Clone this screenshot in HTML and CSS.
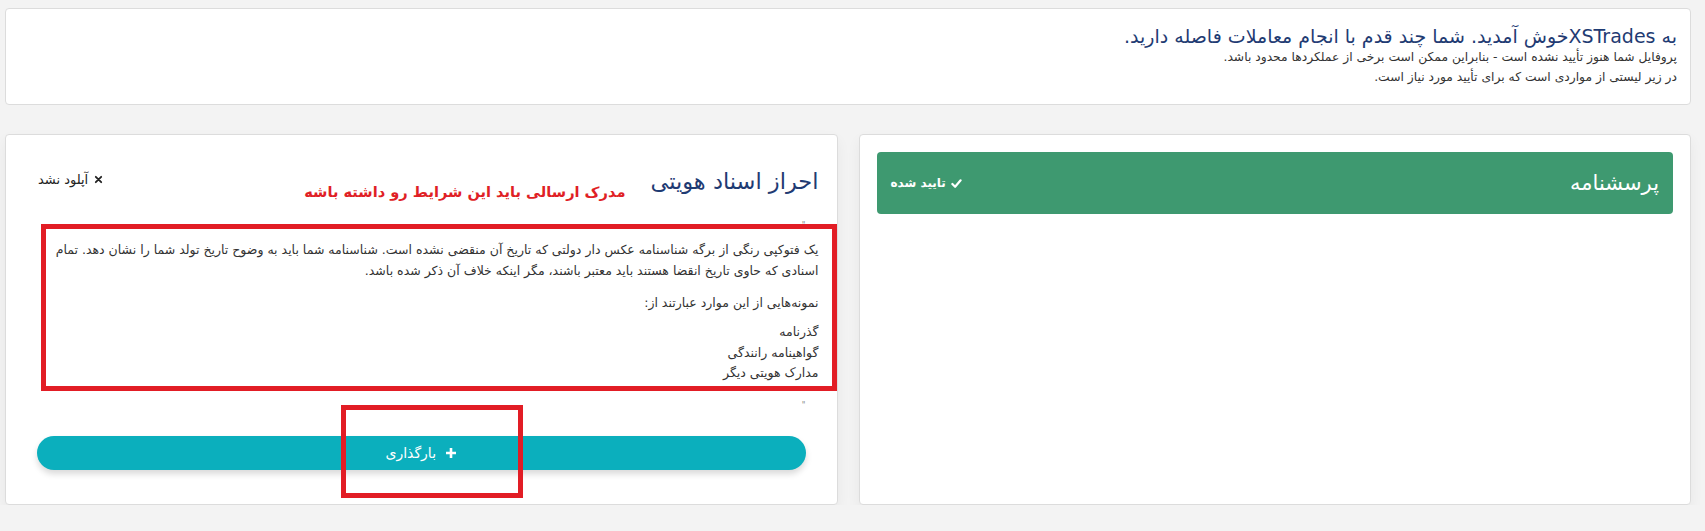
FILE: index.html
```html
<!DOCTYPE html>
<html lang="fa" dir="rtl">
<head>
<meta charset="utf-8">
<title>XSTrades</title>
<link rel="stylesheet" href="styles.css">
</head>
<body>
<div class="page">
  <section class="welcome">
    <h1 class="welcome-title">به XSTradesخوش آمدید. شما چند قدم با انجام معاملات فاصله دارید.</h1>
    <p class="welcome-line">پروفایل شما هنوز تأیید نشده است - بنابراین ممکن است برخی از عملکردها محدود باشد.</p>
    <p class="welcome-line">در زیر لیستی از مواردی است که برای تأیید مورد نیاز است.</p>
  </section>

  <div class="grid">
    <section class="card">
      <div class="status-bar">
        <span class="status-title">پرسشنامه</span>
        <span class="status-badge">
          <svg class="ico-check" viewBox="0 0 12 12" width="11" height="11"><path d="M1.5 6.5 L4.5 9.5 L10.5 2.5" fill="none" stroke="#fff" stroke-width="2.4" stroke-linecap="round" stroke-linejoin="round"/></svg>
          تایید شده
        </span>
      </div>
    </section>

    <section class="card card-doc">
      <div class="doc-head">
        <div class="doc-titles">
          <h2 class="doc-title">احراز اسناد هویتی</h2>
          <span class="doc-note">مدرک ارسالی باید این شرایط رو داشته باشه</span>
        </div>
        <span class="doc-status">
          <svg viewBox="0 0 10 10" width="9" height="9"><path d="M2 2 L8 8 M8 2 L2 8" stroke="#222" stroke-width="2" stroke-linecap="round"/></svg>
          آپلود نشد
        </span>
      </div>
      <div class="doc-body">
        <div class="tick">"</div>
        <p class="doc-p">یک فتوکپی رنگی از برگه شناسنامه عکس دار دولتی که تاریخ آن منقضی نشده است. شناسنامه شما باید به وضوح تاریخ تولد شما را نشان دهد. تمام اسنادی که حاوی تاریخ انقضا هستند باید معتبر باشند، مگر اینکه خلاف آن ذکر شده باشد.</p>
        <p class="doc-p doc-p2">نمونه‌هایی از این موارد عبارتند از:</p>
        <p class="doc-list">گذرنامه<br>گواهینامه رانندگی<br>مدارک هویتی دیگر</p>
        <div class="tick">"</div>
      </div>
      <button class="upload-btn" type="button">
        <svg viewBox="0 0 12 12" width="12" height="12"><path d="M6 1 V11 M1 6 H11" stroke="#fff" stroke-width="2.6"/></svg>
        <span>بارگذاری</span>
      </button>
      <div class="mark mark-text"></div>
      <div class="mark mark-btn"></div>
    </section>
  </div>
</div>
</body>
</html>
```

FILE: styles.css
```css
* { box-sizing: border-box; }
html, body { margin: 0; padding: 0; }
body {
  background: #f3f3f3;
  font-family: "DejaVu Sans", "Noto Sans", sans-serif;
  color: #333;
  direction: rtl;
}
.page {
  padding: 8px 14px 0 5px;
}
.welcome {
  background: #fff;
  border: 1px solid #dcdcdc;
  border-radius: 4px;
  padding: 17px 13px 16px 13px;
  height: 97px;
}
.welcome-title {
  margin: 0;
  font-size: 19px;
  font-weight: normal;
  line-height: 21px;
  color: #1f3b73;
}
.welcome-line {
  margin: 0;
  font-size: 12.3px;
  line-height: 20px;
  color: #333;
}
.grid {
  margin-top: 29px;
  display: grid;
  grid-template-columns: 1fr 1fr;
  gap: 21px;
}
.card {
  background: #fff;
  border: 1px solid #dcdcdc;
  border-radius: 4px;
  box-shadow: 0 6px 14px rgba(0,0,0,0.05);
  padding: 17px 17px;
  position: relative;
  height: 371px;
}
.status-bar {
  background: #3e9970;
  border-radius: 4px;
  height: 62px;
  display: flex;
  align-items: center;
  justify-content: space-between;
  padding: 0 14px 0 14px;
  color: #fff;
}
.status-title {
  font-size: 21px;
}
.status-badge {
  font-size: 12px;
  font-weight: bold;
  display: flex;
  align-items: center;
  gap: 5px;
}
.card-doc {
  padding: 31px 18px 0 18px;
}
.doc-head {
  display: flex;
  justify-content: space-between;
  align-items: flex-start;
}
.doc-titles {
  display: flex;
  align-items: flex-end;
  gap: 25px;
}
.doc-title {
  margin: 0;
  font-size: 22.5px;
  font-weight: normal;
  line-height: 30px;
  color: #1f3b73;
}
.doc-note {
  color: #e01f26;
  font-weight: bold;
  font-size: 14.6px;
  line-height: 20px;
  margin-bottom: -6px;
}
.doc-status {
  display: flex;
  align-items: center;
  gap: 6px;
  font-size: 13px;
  color: #222;
  margin: 6px 13px 0 14px;
}
.doc-body {
  margin-top: 25px;
}
.tick {
  font-size: 8px;
  line-height: 10px;
  height: 10px;
  color: #888;
  margin-right: 13px;
}
.doc-p {
  margin: 8px 0 0 0;
  font-size: 12.5px;
  line-height: 21px;
  color: #333;
}
.doc-p2 {
  margin-top: 11px;
}
.doc-list {
  margin: 9px 0 17px 0;
  font-size: 12.5px;
  line-height: 20.5px;
  color: #333;
}
.upload-btn {
  display: flex;
  align-items: center;
  justify-content: center;
  gap: 9px;
  width: calc(100% - 26px);
  margin: 25px 13px 0 13px;
  height: 34px;
  border: none;
  border-radius: 17px;
  background: #0bafbd;
  color: #fff;
  font-family: inherit;
  font-size: 14px;
  box-shadow: 0 4px 6px rgba(0,0,0,0.15);
  cursor: pointer;
}
.mark {
  position: absolute;
  border: 5px solid #e21d25;
  pointer-events: none;
}
.mark-text {
  left: 35px;
  top: 89px;
  width: 796px;
  height: 167px;
}
.mark-btn {
  left: 335px;
  top: 270px;
  width: 182px;
  height: 93px;
}
```
